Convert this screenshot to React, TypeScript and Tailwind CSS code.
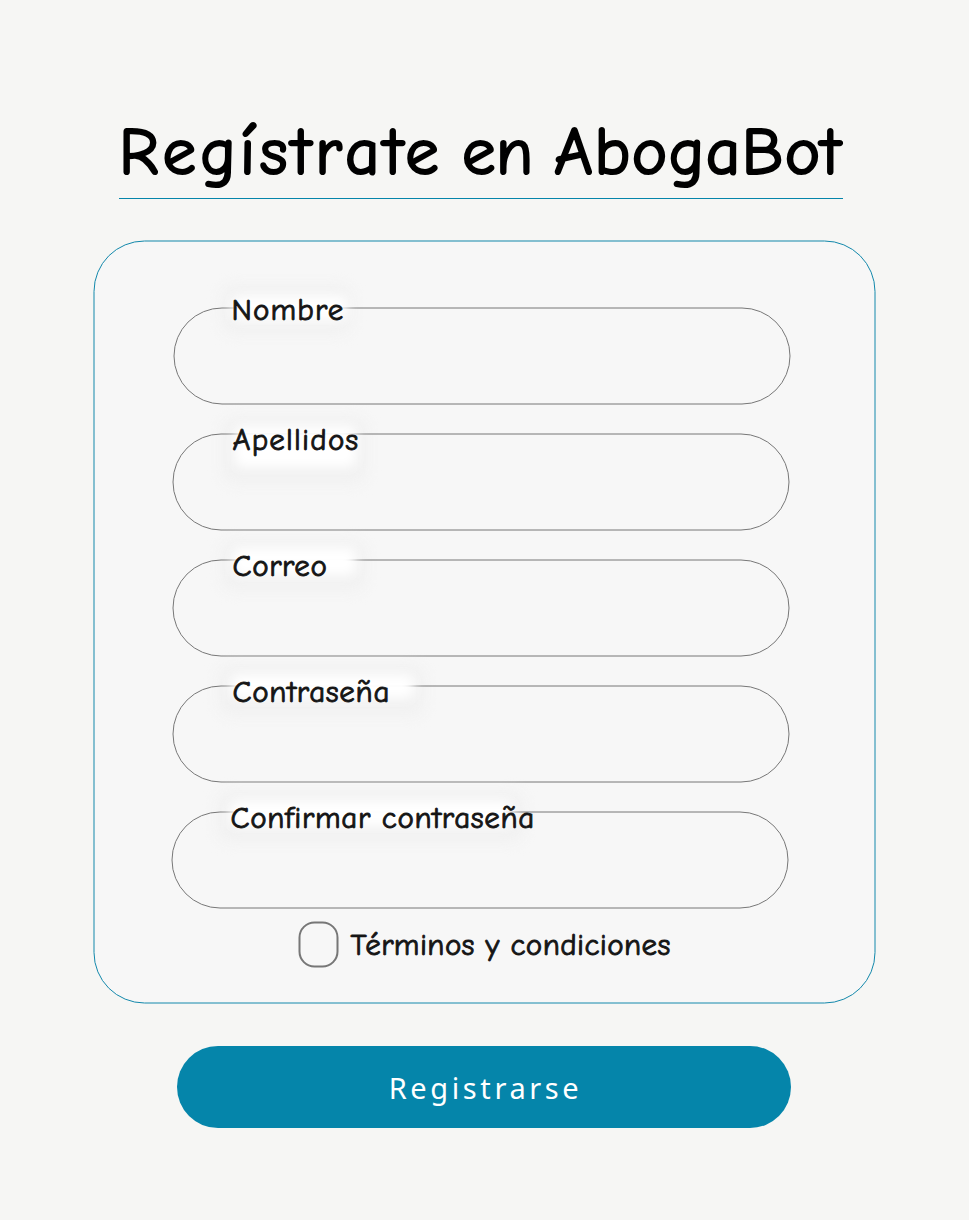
const comic =
  "font-['Comic_Neue','Comic_Sans_MS','Inter',sans-serif] [font-variant-ligatures:none] whitespace-nowrap";

const labelText =
  "text-[31px] leading-[40px] text-[#151515] [-webkit-text-stroke:0.9px_#151515]";

type FieldProps = {
  label: string;
  type?: string;
  offset: string;
  labelClass: string;
  halo: string;
  glow: string;
};

const fields: FieldProps[] = [
  {
    label: "Nombre",
    offset: "ml-[79px]",
    labelClass: "left-[58px] top-[-18px] tracking-[1.1px]",
    halo: "left-[48px] top-[-22px] w-[130px] h-[48px]",
    glow: "left-[58px] top-[-12px] w-[116px] h-[25px]",
  },
  {
    label: "Apellidos",
    offset: "ml-[78px]",
    labelClass: "left-[60px] top-[-14px] tracking-[1.2px]",
    halo: "left-[50px] top-[-16px] w-[144px] h-[66px]",
    glow: "left-[62px] top-[-8px] w-[122px] h-[42px]",
  },
  {
    label: "Correo",
    type: "email",
    offset: "ml-[78px]",
    labelClass: "left-[60px] top-[-14px] tracking-[0.6px]",
    halo: "left-[49px] top-[-19px] w-[144px] h-[50px]",
    glow: "left-[60px] top-[-12px] w-[124px] h-[28px]",
  },
  {
    label: "Contraseña",
    type: "password",
    offset: "ml-[78px]",
    labelClass: "left-[60px] top-[-14px] tracking-[0.7px]",
    halo: "left-[46px] top-[-20px] w-[206px] h-[50px]",
    glow: "left-[58px] top-[-11px] w-[184px] h-[24px]",
  },
  {
    label: "Confirmar contraseña",
    type: "password",
    offset: "ml-[77px]",
    labelClass: "left-[59px] top-[-14px] tracking-[0.65px]",
    halo: "left-[46px] top-[-20px] w-[306px] h-[50px]",
    glow: "left-[58px] top-[-11px] w-[284px] h-[26px]",
  },
];

function Field({ label, type = "text", offset, labelClass, halo, glow }: FieldProps) {
  return (
    <label className={`relative block h-[97px] w-[617px] ${offset}`}>
      <span className={`absolute rounded-[12px] bg-[#f1f1f1] blur-[7px] ${halo}`} />
      <input
        type={type}
        aria-label={label}
        className="relative block h-full w-full rounded-[49px] border border-[#777777] bg-transparent px-14 text-2xl outline-none"
      />
      <span className={`absolute rounded-[8px] bg-white blur-[6px] ${glow}`} />
      <span className={`absolute ${labelText} ${comic} ${labelClass}`}>{label}</span>
    </label>
  );
}

export default function App() {
  return (
    <main className="flex h-[1220px] w-[969px] flex-col bg-[#f6f6f4] pt-[105px]">
      <h1
        className={`ml-[119px] h-[94px] w-[724px] border-b border-[#0585aa] pt-[2px] text-[67px] leading-[92px] text-black [-webkit-text-stroke:2.2px_black] ${comic}`}
      >
        <span className="inline-block w-[343px] tracking-[4.3px]">Regístrate </span>
        <span className="inline-block w-[92px] tracking-[0.5px]">en </span>
        <span className="inline-block tracking-[1.5px]">AbogaBot</span>
      </h1>
      <form className="flex flex-col">
        <section className="mt-[41px] ml-[93px] flex h-[763px] w-[782px] translate-[0.5px] flex-col rounded-[51px] border border-[#1288ab] bg-[#f7f7f7] pt-[66px]">
          <div className="flex flex-col gap-[29px]">
            {fields.map((field) => (
              <Field key={field.label} {...field} />
            ))}
          </div>
          <label className="mt-[13px] ml-[204px] flex h-[46px] items-center">
            <input
              type="checkbox"
              className="h-[46px] w-[40px] shrink-0 appearance-none rounded-[16px] border-2 border-[#777777]"
            />
            <span className={`ml-[12px] tracking-[0.4px] ${labelText} ${comic}`}>
              Términos y condiciones
            </span>
          </label>
        </section>
        <button
          type="button"
          className="mt-[43px] ml-[177px] h-[82px] w-[614px] rounded-[41px] bg-[#0585aa] pt-[2px] pl-[3px] font-['Noto_Sans',sans-serif] text-[29px] tracking-[3.6px] text-white"
        >
          Registrarse
        </button>
      </form>
    </main>
  );
}
